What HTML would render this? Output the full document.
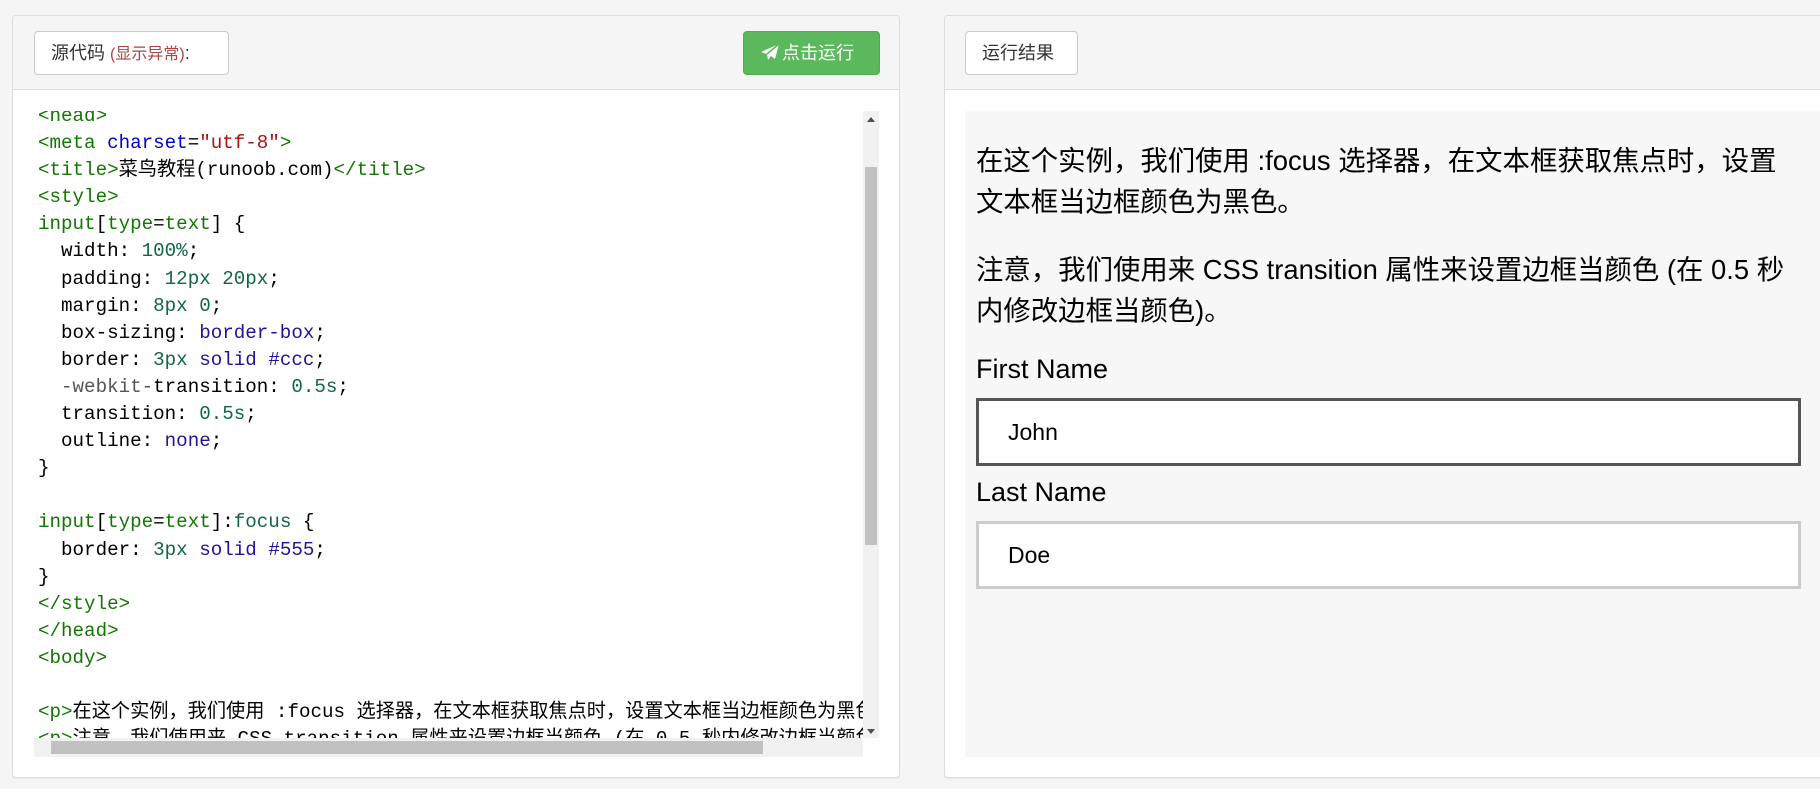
<!DOCTYPE html>
<html><head><meta charset="utf-8"><style>
*{box-sizing:border-box;margin:0;padding:0}
body{width:1820px;height:789px;background:#f5f5f5;position:relative;overflow:hidden;font-family:"Liberation Sans","Noto Sans CJK SC",sans-serif}
.panel{position:absolute;top:15px;background:#fff;border:1px solid #ddd;border-radius:4px;box-shadow:0 1px 1px rgba(0,0,0,.05)}
.hd{position:absolute;left:0;right:0;top:0;height:74px;background:#f5f5f5;border-bottom:1px solid #ddd;border-radius:4px 4px 0 0}
.btn{position:absolute;top:15px;height:44px;border:1px solid #ccc;border-radius:4px;background:#fff;font-size:18px;color:#333;line-height:42px;padding-left:16px}
.green{background:#5cb85c;border-color:#4cae4c;color:#fff;padding-left:16px}
.code{position:absolute;left:34px;top:111px;width:829px;height:627px;overflow:hidden;background:#fff}
pre{position:absolute;left:4px;top:-8px;font-family:"Liberation Mono","Noto Sans CJK SC",monospace;font-size:19.2px;line-height:27.1px;color:#000;white-space:pre}
.t{color:#117700}.a{color:#0000cc}.s{color:#aa1111}.n{color:#116644}.k{color:#221199}.g{color:#555}
.res{position:absolute;left:965px;top:111px;width:855px;height:646px;background:#f7f7f7;font-size:27.4px;color:#000}
.res p{position:absolute;left:11px;line-height:41px;white-space:nowrap}
.lab{position:absolute;left:11px;font-size:27px}
.inp{position:absolute;left:11px;width:825px;height:68px;background:#fff;border:3px solid #ccc;font-size:23px;line-height:62px;padding-left:29px}
</style></head><body>
<div class="panel" style="left:12px;width:888px;height:763px">
  <div class="hd"></div>
  <div class="btn" style="left:21px;width:195px">源代码 <span style="color:#a94442;font-size:16px">(显示异常)</span>:</div>
  <div class="btn green" style="left:730px;width:137px"><svg width="20" height="18" viewBox="0 0 20 18" style="vertical-align:-2px;margin-right:2px"><path d="M19 1L1 9l6 2 1 6 3-4 4 3z" fill="#fff"/><path d="M19 1L7 11" stroke="#5cb85c" stroke-width="1.5"/></svg>点击运行</div>
</div>
<div class="code"><pre><span class="t">&lt;head&gt;</span>
<span class="t">&lt;meta</span> <span class="a">charset</span>=<span class="s">"utf-8"</span><span class="t">&gt;</span>
<span class="t">&lt;title&gt;</span>菜鸟教程(runoob.com)<span class="t">&lt;/title&gt;</span>
<span class="t">&lt;style&gt;</span>
<span class="t">input</span>[<span class="t">type</span>=<span class="t">text</span>] {
  width: <span class="n">100%</span>;
  padding: <span class="n">12px</span> <span class="n">20px</span>;
  margin: <span class="n">8px</span> <span class="n">0</span>;
  box-sizing: <span class="k">border-box</span>;
  border: <span class="n">3px</span> <span class="k">solid</span> <span class="k">#ccc</span>;
  <span class="g">-webkit-</span>transition: <span class="n">0.5s</span>;
  transition: <span class="n">0.5s</span>;
  outline: <span class="k">none</span>;
}

<span class="t">input</span>[<span class="t">type</span>=<span class="t">text</span>]:<span class="n">focus</span> {
  border: <span class="n">3px</span> <span class="k">solid</span> <span class="k">#555</span>;
}
<span class="t">&lt;/style&gt;</span>
<span class="t">&lt;/head&gt;</span>
<span class="t">&lt;body&gt;</span>

<span class="t">&lt;p&gt;</span>在这个实例，我们使用 :focus 选择器，在文本框获取焦点时，设置文本框当边框颜色为黑色。
<span class="t">&lt;p&gt;</span>注意，我们使用来 CSS transition 属性来设置边框当颜色 (在 0.5 秒内修改边框当颜色)。</pre></div>
<div style="position:absolute;left:863px;top:111px;width:16px;height:627px;background:#f1f1f1"></div>
<div style="position:absolute;left:865px;top:167px;width:12px;height:378px;background:#c1c1c1"></div>
<div style="position:absolute;left:867px;top:117px;width:0;height:0;border:4px solid transparent;border-bottom:5px solid #505050;border-top:0"></div>
<div style="position:absolute;left:867px;top:729px;width:0;height:0;border:4px solid transparent;border-top:5px solid #505050;border-bottom:0"></div>
<div style="position:absolute;left:34px;top:738px;width:829px;height:19px;background:#f1f1f1"></div>
<div style="position:absolute;left:51px;top:741px;width:712px;height:13px;background:#c1c1c1"></div>
<div class="panel" style="left:944px;width:890px;height:763px">
  <div class="hd"></div>
  <div class="btn" style="left:20px;width:113px">运行结果</div>
</div>
<div class="res">
  <p style="top:29px">在这个实例，我们使用 :focus 选择器，在文本框获取焦点时，设置<br>文本框当边框颜色为黑色。</p>
  <p style="top:138px">注意，我们使用来 CSS transition 属性来设置边框当颜色 (在 0.5 秒<br>内修改边框当颜色)。</p>
  <div class="lab" style="top:243px">First Name</div>
  <div class="inp" style="top:287px;border-color:#555">John</div>
  <div class="lab" style="top:366px">Last Name</div>
  <div class="inp" style="top:410px">Doe</div>
</div>
</body></html>
